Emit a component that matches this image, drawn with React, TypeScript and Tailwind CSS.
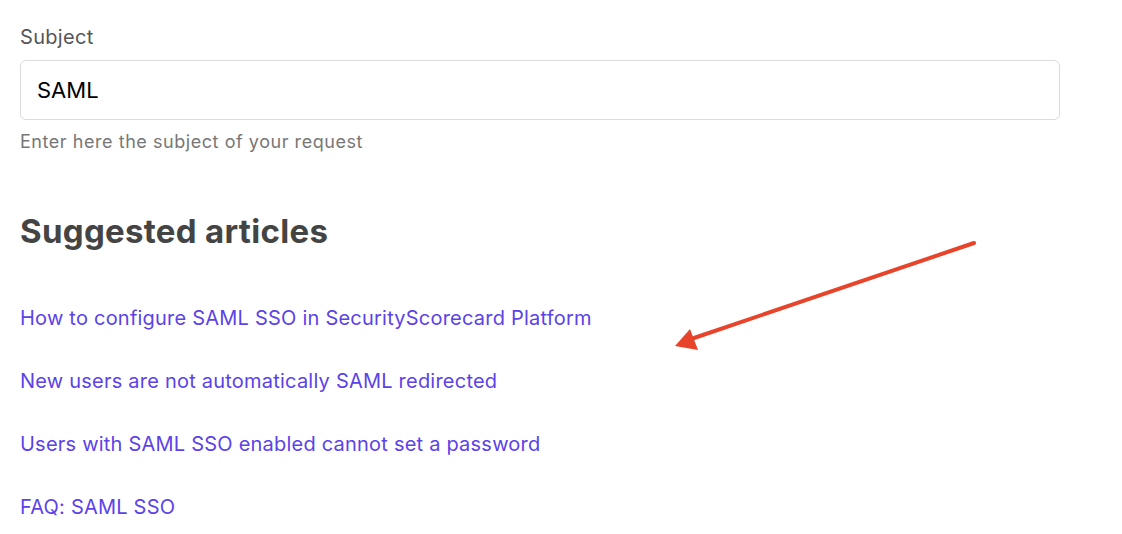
import React from 'react';

const articles = [
  'How to configure SAML SSO in SecurityScorecard Platform',
  'New users are not automatically SAML redirected',
  'Users with SAML SSO enabled cannot set a password',
  'FAQ: SAML SSO',
];

export default function App() {
  return (
    <div className="relative w-[1122px] h-[534px] bg-white overflow-hidden font-['Inter','Liberation_Sans',sans-serif]">
      <div className="pl-5 pt-[23px] w-[1060px]">
        <label className="block text-[20px] leading-[28px] text-[#555] tracking-[0.3px]">Subject</label>
        <div className="mt-[9px] h-[60px] border border-[#dcdcdc] rounded-md flex items-center px-4">
          <span className="text-[22px] text-black">SAML</span>
        </div>
        <p className="mt-[10px] text-[18px] leading-[24px] text-[#777] tracking-[0.55px]">Enter here the subject of your request</p>
        <h2 className="mt-[57px] text-[33px] leading-[40px] font-bold text-[#444] tracking-[0.3px]">Suggested articles</h2>
        <ul className="mt-[53px] flex flex-col gap-[35px]">
          {articles.map(a => (
            <li key={a}>
              <a href="#" className="text-[20px] leading-[28px] text-[#5b43e8] tracking-[0.22px]">{a}</a>
            </li>
          ))}
        </ul>
      </div>
      {/* annotation arrow */}
      <svg className="absolute left-0 top-0" width="1122" height="534" viewBox="0 0 1122 534">
        <line x1="974" y1="243" x2="694" y2="338" stroke="#e8442b" strokeWidth="4" strokeLinecap="round" />
        <polygon points="675,346 690,329 698,350" fill="#e8442b" />
      </svg>
    </div>
  );
}
